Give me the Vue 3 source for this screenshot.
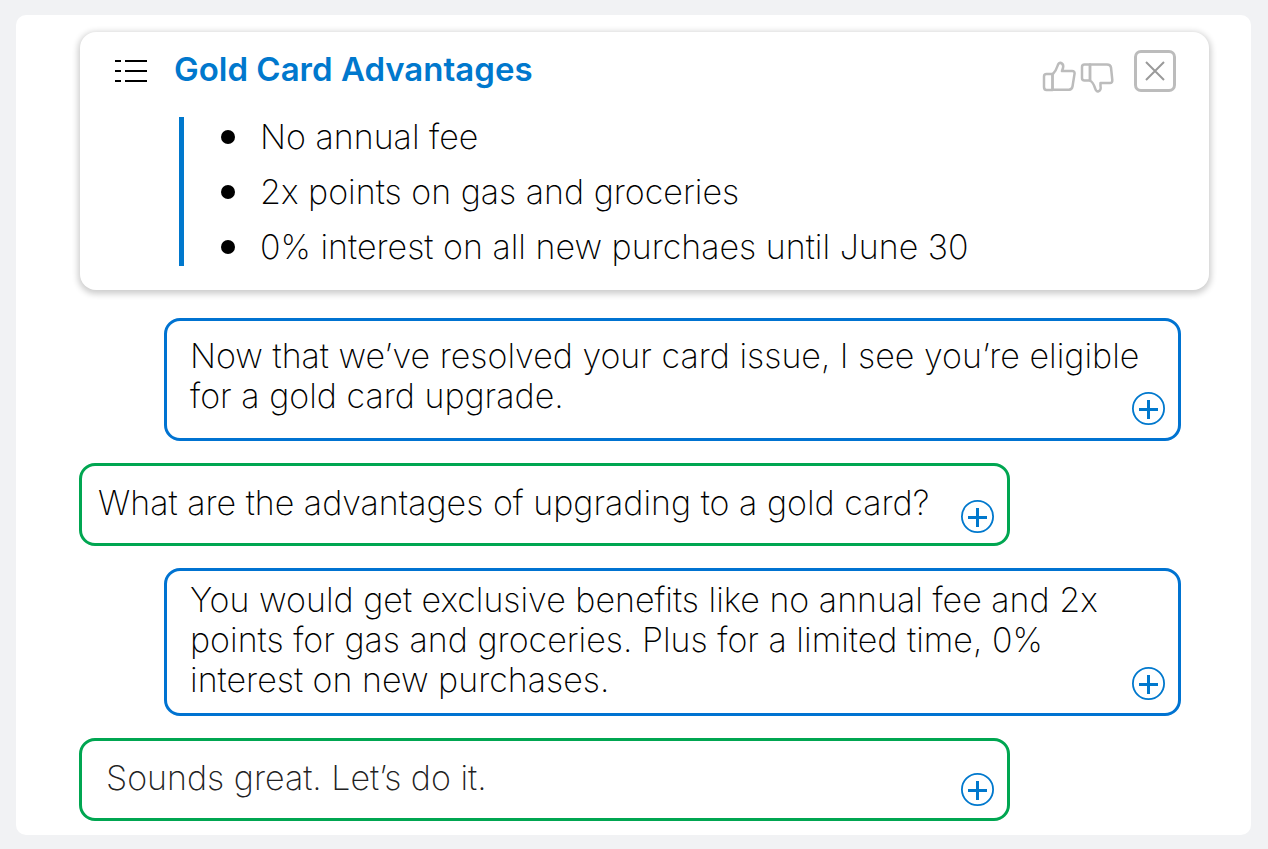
<script setup>
import { ref } from 'vue'

const advantages = [
  'No annual fee',
  '2x points on gas and groceries',
  '0% interest on all new purchaes until June 30',
]

const messages = [
  { from: 'agent', size: 'medium', text: 'Now that we’ve resolved your card issue, I see you’re eligible for a gold card upgrade.' },
  { from: 'customer', size: 'wide', text: 'What are the advantages of upgrading to a gold card?' },
  { from: 'agent', size: 'tall', text: 'You would get exclusive benefits like no annual fee and 2x points for gas and groceries. Plus for a limited time, 0% interest on new purchases.' },
  { from: 'customer', size: 'short', text: 'Sounds great. Let’s do it.' },
]

const open = ref(true)
</script>

<template>
  <main class="panel">
    <section v-if="open" class="card">
      <header class="card-head">
        <svg class="list-icon" width="32" height="22" viewBox="0 0 32 22" aria-hidden="true">
          <path d="M0 1h6M10 1h22M0 11h6M10 11h22M0 21h6M10 21h22" stroke="#000" stroke-width="2" />
        </svg>
        <h1>Gold Card Advantages</h1>
        <div class="votes">
          <button type="button" aria-label="Helpful">
            <svg width="34" height="32" viewBox="0 0 34 32" fill="none" stroke="#bcbcbc" stroke-width="2.5" stroke-linejoin="round">
              <path d="M10.5 13H4.5Q2 13 2 15.5V26Q2 29 4.5 29H10.5Z" />
              <path d="M10.5 13.5Q14 10 15.5 5Q16.5 1.8 18.5 1.8Q22 3 21 7L20 10H30Q33 10 32.5 13L30.5 25.5Q30 28.5 27 28.8H10.5Z" />
            </svg>
          </button>
          <button type="button" aria-label="Not helpful">
            <svg width="34" height="32" viewBox="0 0 34 32" fill="none" stroke="#bcbcbc" stroke-width="2.5" stroke-linejoin="round">
              <path d="M10 3.5H4.5Q2 3.5 2 6V17Q2 19.5 4.5 19.5H10Z" />
              <path d="M10 19.5Q13 21 15 27Q16 30.5 18 30.5Q21.5 29.5 20.5 25V22H30Q32.5 22 32.3 19L31 6.5Q30.5 3.5 27 3.5H10Z" />
            </svg>
          </button>
        </div>
        <button class="close" type="button" aria-label="Close" @click="open = false">
          <svg width="20" height="20" viewBox="0 0 20 20" aria-hidden="true">
            <path d="M1 1L19 19M19 1L1 19" stroke="#9a9a9a" stroke-width="2" />
          </svg>
        </button>
      </header>
      <ul class="advantages">
        <li v-for="item in advantages" :key="item">{{ item }}</li>
      </ul>
    </section>

    <div class="thread">
      <article v-for="m in messages" :key="m.text" class="bubble" :class="[m.from, m.size]">
        <p>{{ m.text }}</p>
        <button class="add" type="button" aria-label="Add">
          <svg width="33" height="33" viewBox="0 0 33 33" aria-hidden="true">
            <circle cx="16.5" cy="16.5" r="15.6" fill="none" stroke="#0078cd" stroke-width="1.8" />
            <path d="M7 17.5H26M16.5 8V27" stroke="#0078cd" stroke-width="3" />
          </svg>
        </button>
      </article>
    </div>
  </main>
</template>

<style>
body {
  margin: 0;
  background: #f1f2f4;
}
</style>

<style scoped>
.panel {
  box-sizing: border-box;
  margin: 15px 17px 14px 16px;
  padding: 17px 42px 14px 64px;
  border-radius: 10px;
  background: #fff;
  font-family: Inter, "Liberation Sans", sans-serif;
  font-size: 34px;
  font-weight: 200;
  line-height: 40px;
  color: #000;
  overflow: hidden;
}
button {
  display: block;
  flex: none;
  margin: 0;
  padding: 0;
  border: 0;
  background: none;
  cursor: pointer;
}
svg {
  display: block;
}
.card {
  box-sizing: border-box;
  padding: 18px 33px 24px 35px;
  border-radius: 16px;
  background: #fff;
  box-shadow: 0 2px 6px 2px rgba(0, 0, 0, 0.2);
}
.card-head {
  display: flex;
  align-items: center;
  height: 42px;
}
.list-icon {
  flex: none;
}
h1 {
  flex: 1;
  margin: 0 0 4px 27px;
  font-size: 33px;
  line-height: 40px;
  font-weight: 600;
  color: #0078cd;
}
.votes {
  display: flex;
  gap: 4px;
  margin: 12px 20px 0 0;
}
.close {
  display: grid;
  place-items: center;
  box-sizing: border-box;
  width: 42px;
  height: 42px;
  border: 3px solid #bcbcbc;
  border-radius: 7px;
}
.advantages {
  display: grid;
  gap: 16px;
  margin: 25px 0 0 64px;
  padding: 0 0 0 37px;
  border-left: 5px solid #0078cd;
  line-height: 39px;
  list-style: none;
}
.advantages li {
  display: flex;
  align-items: center;
  gap: 25px;
}
.advantages li::before {
  content: "";
  flex: none;
  width: 14px;
  height: 14px;
  border-radius: 50%;
  background: #000;
}
.thread {
  display: grid;
  gap: 22px;
  margin-top: 28px;
}
.bubble {
  display: flex;
  align-items: flex-end;
  box-sizing: border-box;
  padding: 9px 13px 13px 23px;
  border: 3px solid #0073d1;
  border-radius: 16px;
}
.bubble p {
  flex: 1;
  align-self: flex-start;
  margin: 0 -12px 0 0;
}
.agent {
  margin: 0 28px 0 84px;
}
.customer {
  margin: 0 199px 0 -1px;
  min-height: 83px;
  border-color: #00a651;
}
.medium {
  min-height: 123px;
  padding-top: 15px;
}
.wide {
  padding: 17px 13px 10px 16px;
}
.tall {
  min-height: 148px;
}
.short {
  padding: 17px 13px 12px 24px;
  color: #222;
}
</style>
